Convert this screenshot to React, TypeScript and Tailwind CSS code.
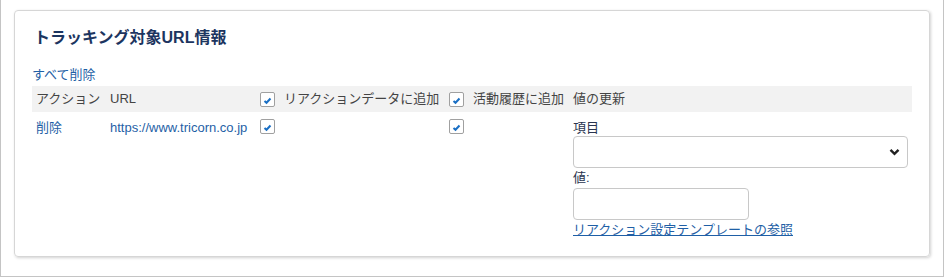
const font = { fontFamily: '"Liberation Sans", "Noto Sans CJK JP", sans-serif' };

function Box() {
  return (
    <span className="inline-block h-[15px] w-[15px] rounded-[2px] border border-[#a0a0a0] bg-white">
      <svg width="13" height="13" viewBox="0 0 13 13" className="block">
        <path d="M3.5 8 L5.5 9.8 L9.5 5.5" fill="none" stroke="#1a6fc4" strokeWidth="2" />
      </svg>
    </span>
  );
}

export default function App() {
  return (
    <div
      className="h-[277px] w-[944px] border-x border-b border-[#c4c4c4] bg-white pl-[13px] pr-[13px] pt-[10px] text-[13px]"
      style={font}
    >
      <div className="h-[247px] rounded-[4px] border border-[#d6d6d6] px-[17px] shadow-[1px_1px_3px_rgba(0,0,0,0.18)]">
        <h2 className="mt-[15px] pl-[2px] text-[16px] font-bold leading-[24px] text-[#1c3560]">
          トラッキング対象URL情報
        </h2>
        <div className="mt-[16px] mb-[2px] leading-[18px] text-[#1f5fa6]">すべて削除</div>
        <div className="grid grid-cols-[74px_150px_189px_124px_1fr] items-center bg-[#f2f2f2] h-[26px] text-[#444]">
          <div className="pl-1">アクション</div>
          <div className="pl-1">URL</div>
          <div className="flex items-center gap-[9px] pl-1">
            <Box />
            <span>リアクションデータに追加</span>
          </div>
          <div className="flex items-center gap-[9px] pl-1">
            <Box />
            <span>活動履歴に追加</span>
          </div>
          <div className="pl-1">値の更新</div>
        </div>
        <div className="grid grid-cols-[74px_150px_189px_124px_1fr] items-start pt-[6px]">
          <div className="pl-1 leading-[20px] text-[#1f5fa6]">削除</div>
          <div className="pl-1 leading-[20px] text-[#1f5fa6] whitespace-nowrap">https://www.tricorn.co.jp</div>
          <div className="pl-1 pt-[1px]">
            <Box />
          </div>
          <div className="pl-1 pt-[1px]">
            <Box />
          </div>
          <div className="pl-1 pr-2 pt-[1px] text-[#2a3550]">
            <div className="leading-[18px]">項目</div>
            <div className="-mt-[1px] flex h-[32px] w-[335px] items-center justify-end rounded-[4px] border border-[#c8c8c8] bg-white pr-[7px]">
              <svg width="11" height="8" viewBox="0 0 11 8">
                <path d="M1.5 1.8 L5.5 5.8 L9.5 1.8" fill="none" stroke="#222" strokeWidth="2.4" />
              </svg>
            </div>
            <div className="mt-[1px] leading-[18px]">値:</div>
            <div className="mt-[1px] h-[32px] w-[176px] rounded-[4px] border border-[#c8c8c8] bg-white" />
            <div className="mt-[1px] leading-[18px] text-[#1f5fa6] underline">
              リアクション設定テンプレートの参照
            </div>
          </div>
        </div>
      </div>
    </div>
  );
}
